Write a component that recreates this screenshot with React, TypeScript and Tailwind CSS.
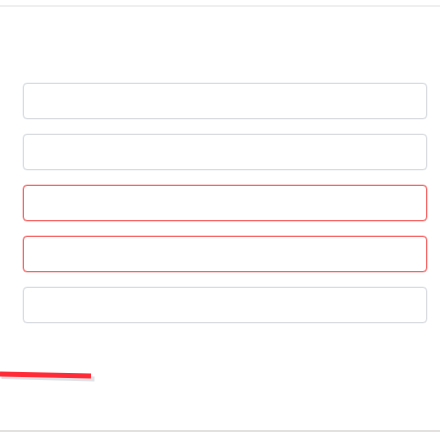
export default function App() {
  const fields = [false, false, true, true, false];
  return (
    <div className="w-[440px] h-[440px] bg-white flex flex-col" style={{ fontFamily: '"Liberation Sans", sans-serif' }}>
      <div className="mt-[5px] h-[2px] bg-[#efefef]" />
      <div className="flex flex-col gap-[15px] pl-[23px] pr-[13px] pt-[76px]">
        {fields.map((err, i) => (
          <input
            key={i}
            className={`h-[36px] w-full rounded-[4px] border bg-white outline-none ${err ? 'border-[#f56565] shadow-[0_0_0_0.5px_#fca5a5]' : 'border-[#d8dbe0] shadow-[0_0_0_0.5px_#eceef1]'}`}
          />
        ))}
      </div>
      <svg width="100" height="14" viewBox="0 0 100 14" className="mt-[46px] block">
        <line x1="0" y1="6" x2="93" y2="8.5" stroke="#9ca3af" strokeWidth="5" opacity="0.3" transform="translate(1.5 1.5)" />
        <line x1="0" y1="5" x2="91" y2="7" stroke="#ff2b36" strokeWidth="5" />
      </svg>
      <div className="mt-[47px] h-[2px] bg-[#e3e0e0]" />
    </div>
  );
}
